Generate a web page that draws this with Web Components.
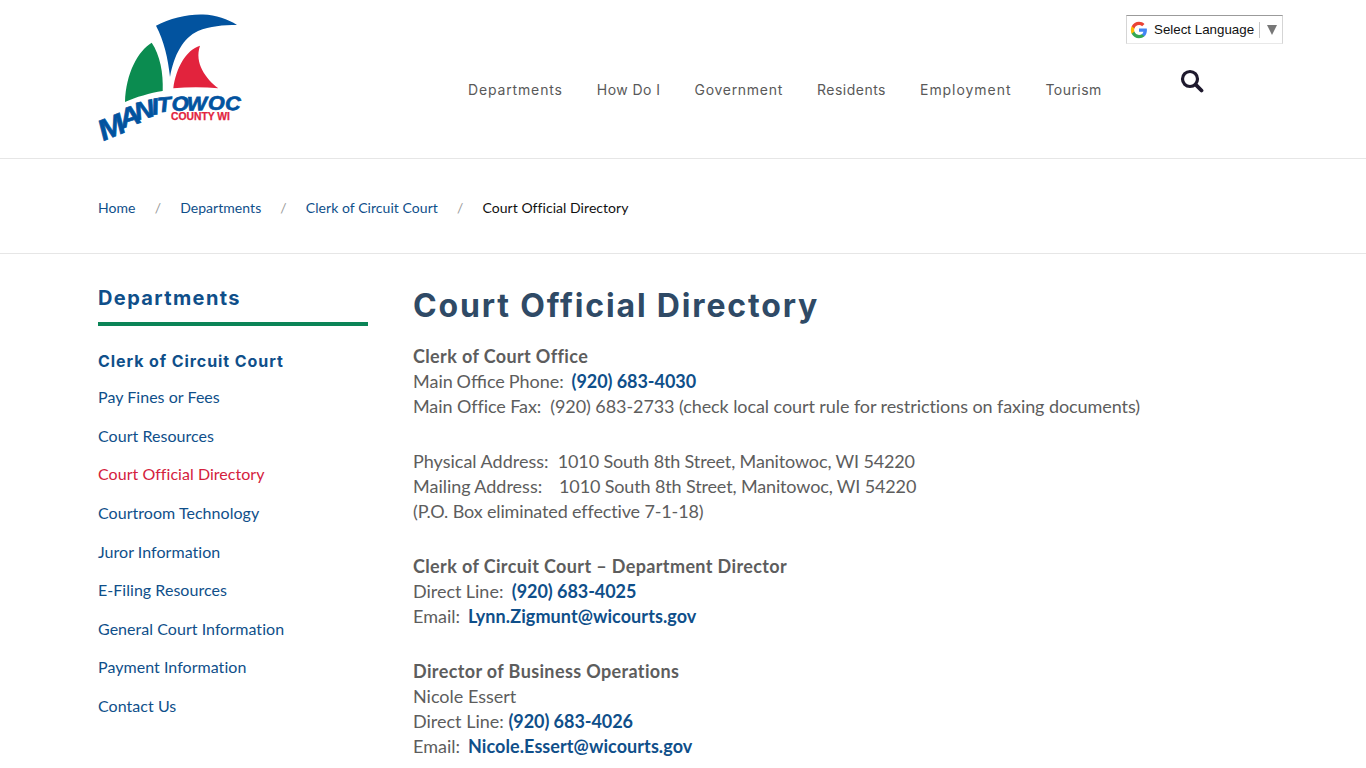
<!DOCTYPE html>
<html lang="en">
<head>
<meta charset="utf-8">
<title>Court Official Directory</title>
<style>
  html, body { margin: 0; padding: 0; background: #fff; height: 768px; overflow: hidden; }
  body { font-family: Lato, "Liberation Sans", sans-serif; }
</style>
</head>
<body>
<site-header></site-header>
<bread-crumbs>
  <a href="#">Home</a>
  <a href="#">Departments</a>
  <a href="#">Clerk of Circuit Court</a>
  <span>Court Official Directory</span>
</bread-crumbs>
<page-body>
  <side-nav slot="side"></side-nav>
  <directory-content slot="main"></directory-content>
</page-body>

<script>
class SiteLogo extends HTMLElement {
    connectedCallback() {
        this.attachShadow({ mode: 'open' });
        // wordmark letters follow the curve, each one has its own place, size and angle
        const word = [
            ['M', 5, 128, 29, -24], ['A', 22.5, 115.5, 27, -20], ['N', 35.5, 107.5, 25, -15],
            ['I', 50, 102, 23, -10], ['T', 54.5, 99.5, 21, -6], ['O', 67.3, 98, 20, -3],
            ['W', 80.9, 97.5, 19.5, -1], ['O', 100, 97, 19.5, 0], ['C', 115.5, 97, 19.5, 1]
        ];
        this.shadowRoot.innerHTML = `
            <style>
                :host { display: block; width: 146px; height: 132px; }
                svg { display: block; overflow: visible; }
                text { font-family: "Liberation Sans", Arial, sans-serif; font-weight: 700; }
            </style>
            <svg width="146" height="132" viewBox="0 0 146 132">
                <path fill="#02539f" d="M58 12.700 C72 5 90 1 105 1.500 C118 2 130 6 139 12 C125 12 112 13 100 18 C85 25 76 42 72 64 C70 45 66 28 58 12.700Z"/>
                <path fill="#0b8c50" d="M53.700 29.700 C40 38 28 60 27 89 C38 84 52 80 64.700 78 C65.500 60 62 42 53.700 29.700Z"/>
                <path fill="#e2233d" d="M102 32.700 C88 37 78 55 75.300 75.300 C90 74 106 74 120.300 75.300 C108 66 96 50 102 32.700Z"/>
                <text transform="scale(1.1 1)" font-style="italic" fill="#02539f" stroke="#02539f" stroke-width=".7">${word.map(([c, x, y, s, r]) => `<tspan x="${x}" y="${y}" font-size="${s}" rotate="${r}">${c}</tspan>`).join('')}</text>
                <text x="73" y="106.500" font-size="10" fill="#e2233d" stroke="#e2233d" stroke-width=".25" textLength="59" lengthAdjust="spacingAndGlyphs">COUNTY WI</text>
            </svg>
        `;
    }
}
customElements.define('site-logo', SiteLogo);

class LanguagePicker extends HTMLElement {
    connectedCallback() {
        this.attachShadow({ mode: 'open' });
        this.shadowRoot.innerHTML = `
            <style>
                :host {
                    display: flex;
                    align-items: center;
                    box-sizing: border-box;
                    width: 157px;
                    height: 29px;
                    padding: 0 3px 0 3px;
                    background: #fff;
                    border: 1px solid;
                    border-color: #9b9b9b #d5d5d5 #e8e8e8 #d5d5d5;
                    font: 13.330px "Liberation Sans", Arial, sans-serif;
                    color: #111;
                }
                svg { display: block; flex: none; }
                .label { margin-left: 6px; white-space: nowrap; }
                .sep { width: 1px; height: 16px; background: #c8c8c8; margin-left: 5px; }
                .arrow { margin-left: 7px; width: 0; height: 0; border-left: 5px solid transparent; border-right: 5px solid transparent; border-top: 10px solid #777; }
            </style>
            <svg width="18" height="18" viewBox="0 0 48 48">
                <path fill="#4285F4" d="M45.100 24.500c0-1.600-.1-3.100-.4-4.500H24v8.500h11.800c-.5 2.800-2.100 5.100-4.400 6.700v5.500h7.100c4.200-3.800 6.600-9.500 6.600-16.200z"/>
                <path fill="#34A853" d="M24 46c5.900 0 10.900-2 14.500-5.300l-7.100-5.500c-2 1.300-4.500 2.100-7.400 2.100-5.700 0-10.500-3.800-12.200-9H4.500v5.700C8.100 41.200 15.500 46 24 46z"/>
                <path fill="#FBBC05" d="M11.800 28.300c-.4-1.300-.7-2.700-.7-4.300s.3-3 .7-4.300V14H4.500C3 17 2.200 20.400 2.200 24s.8 7 2.300 10l7.300-5.700z"/>
                <path fill="#EA4335" d="M24 10.700c3.200 0 6.100 1.100 8.400 3.300l6.300-6.300C34.900 4.200 29.900 2 24 2 15.500 2 8.100 6.800 4.500 14l7.300 5.700c1.700-5.200 6.500-9 12.200-9z"/>
            </svg>
            <span class="label">Select Language</span>
            <span class="sep"></span>
            <span class="arrow"></span>
        `;
    }
}
customElements.define('language-picker', LanguagePicker);

class SiteHeader extends HTMLElement {
    connectedCallback() {
        this.attachShadow({ mode: 'open' });
        const items = [['Departments', .85], ['How Do I', .45], ['Government', .7], ['Residents', .5], ['Employment', .95], ['Tourism', .45]];
        this.shadowRoot.innerHTML = `
            <style>
                :host { display: block; height: 159px; box-sizing: border-box; border-bottom: 1px solid #e6e6e6; }
                .wrap { position: relative; display: flex; height: 158px; padding-left: 98px; }
                site-logo { margin-top: 13px; }
                nav { display: flex; gap: 34px; margin-left: 224px; padding-top: 81px; }
                nav a {
                    font: 400 14px/18px Inter, "Open Sans", sans-serif;
                    color: #595959;
                    text-decoration: none;
                    white-space: nowrap;
                }
                .tools { position: absolute; left: 1126px; top: 15px; width: 157px; }
                .search { position: absolute; left: 54px; top: 54px; display: block; }
            </style>
            <div class="wrap">
                <site-logo></site-logo>
                <nav>${items.map(([t, s]) => `<a href="#" style="letter-spacing:${s}px">${t}</a>`).join('')}</nav>
                <div class="tools">
                    <language-picker></language-picker>
                    <svg class="search" width="24" height="24" viewBox="0 0 24 24" fill="none" stroke="#1f1a2e" stroke-linecap="round">
                        <circle cx="10" cy="10" r="7.500" stroke-width="3.200"/>
                        <path d="M15.700 15.700 L21.500 21.500" stroke-width="3.800"/>
                    </svg>
                </div>
            </div>
        `;
    }
}
customElements.define('site-header', SiteHeader);

class BreadCrumbs extends HTMLElement {
    connectedCallback() {
        this.attachShadow({ mode: 'open' });
        const parts = Array.from(this.children);
        parts.forEach((el, i) => { el.slot = 'c' + i; });
        this.shadowRoot.innerHTML = `
            <style>
                :host {
                    display: flex;
                    align-items: center;
                    box-sizing: border-box;
                    height: 95px;
                    padding: 4px 0 0 98px;
                    border-bottom: 1px solid #e6e6e6;
                    font: 14px/20px Lato, sans-serif;
                    letter-spacing: .05px;
                    font-variant-ligatures: common-ligatures;
                    color: #111;
                }
                .sep { color: #9a9a9a; width: 44.600px; text-align: center; }
                ::slotted(a) { color: #0f4f8a; text-decoration: none; }
            </style>
            ${parts.map((_, i) => (i ? '<span class="sep">/</span>' : '') + `<slot name="c${i}"></slot>`).join('')}
        `;
    }
}
customElements.define('bread-crumbs', BreadCrumbs);

class PageBody extends HTMLElement {
    connectedCallback() {
        this.attachShadow({ mode: 'open' });
        this.shadowRoot.innerHTML = `
            <style>
                :host { display: flex; padding-left: 98px; }
                .side { width: 270px; flex: none; }
                .main { margin-left: 45px; flex: 1; }
            </style>
            <div class="side"><slot name="side"></slot></div>
            <div class="main"><slot name="main"></slot></div>
        `;
    }
}
customElements.define('page-body', PageBody);

class SideNav extends HTMLElement {
    connectedCallback() {
        this.attachShadow({ mode: 'open' });
        const links = ['Pay Fines or Fees', 'Court Resources', 'Court Official Directory', 'Courtroom Technology',
            'Juror Information', 'E-Filing Resources', 'General Court Information', 'Payment Information', 'Contact Us'];
        this.shadowRoot.innerHTML = `
            <style>
                :host { display: block; padding-top: 31px; }
                h2 {
                    margin: 0;
                    height: 37px;
                    border-bottom: 4px solid #0b8457;
                    font: 700 20px/27px Inter, sans-serif;
                    letter-spacing: 1.390px;
                    color: #0f4f8a;
                }
                h3 {
                    margin: 25px 0 16.330px;
                    font: 700 16px/20px Inter, sans-serif;
                    letter-spacing: .92px;
                    color: #0f4f8a;
                }
                ul { list-style: none; margin: 0; padding: 0; display: grid; grid-auto-rows: 20px; row-gap: 18.590px; }
                a {
                    font: 16px/20px Lato, sans-serif;
                    letter-spacing: .04px;
                    font-variant-ligatures: common-ligatures;
                    color: #0f4f8a;
                    text-decoration: none;
                    white-space: nowrap;
                }
                a.on { color: #d4213d; }
            </style>
            <h2>Departments</h2>
            <h3>Clerk of Circuit Court</h3>
            <ul>${links.map(l => `<li><a href="#"${l === 'Court Official Directory' ? ' class="on"' : ''}>${l}</a></li>`).join('')}</ul>
        `;
    }
}
customElements.define('side-nav', SideNav);

class DirectoryContent extends HTMLElement {
    connectedCallback() {
        this.attachShadow({ mode: 'open' });
        this.shadowRoot.innerHTML = `
            <style>
                :host {
                    display: block;
                    padding-top: 32px;
                    font: 18px/25px Lato, sans-serif;
                    font-variant-ligatures: common-ligatures;
                    color: #5d5d5d;
                }
                h1 {
                    margin: 0 0 18px;
                    font: 700 32px/40px Inter, sans-serif;
                    letter-spacing: 1.840px;
                    color: #2f4a66;
                }
                p { margin: 0 0 30px; white-space: nowrap; }
                b { font-weight: 700; letter-spacing: .37px; }
                a { color: #0f4f8a; font-weight: 700; text-decoration: none; }
                a.phone { letter-spacing: -.06px; }
                a.mail { letter-spacing: .08px; }
                .tight { letter-spacing: -.08px; }
                .addr { letter-spacing: -.14px; }
                .phone-label { word-spacing: -.75px; }
                .direct-label { word-spacing: -.4px; }
                .mail-label { word-spacing: -.6px; }
                .post-label { word-spacing: -.4px; }
            </style>
            <h1>Court Official Directory</h1>
            <p><b>Clerk of Court Office</b><br>
            <span class="phone-label">Main Office Phone:&nbsp; </span><a class="phone" href="#">(920) 683-4030</a><br>
            <span class="tight">Main Office Fax:&nbsp; (920) 683-2733 (check local court rule for restrictions on faxing documents)</span></p>
            <p>Physical Address:&nbsp; <span class="addr">1010 South 8th Street, Manitowoc, WI 54220</span><br>
            <span class="post-label">Mailing Address:&nbsp;&nbsp;&nbsp; </span><span class="addr">1010 South 8th Street, Manitowoc, WI 54220</span><br>
            <span class="addr">(P.O. Box eliminated effective 7-1-18)</span></p>
            <p><b>Clerk of Circuit Court – Department Director</b><br>
            <span class="direct-label">Direct Line:&nbsp; </span><a class="phone" href="#">(920) 683-4025</a><br>
            <span class="mail-label">Email:&nbsp; </span><a class="mail" href="#">Lynn.Zigmunt@wicourts.gov</a></p>
            <p><b>Director of Business Operations</b><br>
            Nicole Essert<br>
            Direct Line: <a class="phone" href="#">(920) 683-4026</a><br>
            <span class="mail-label">Email:&nbsp; </span><a class="mail" href="#">Nicole.Essert@wicourts.gov</a></p>
        `;
    }
}
customElements.define('directory-content', DirectoryContent);
</script>
</body>
</html>
